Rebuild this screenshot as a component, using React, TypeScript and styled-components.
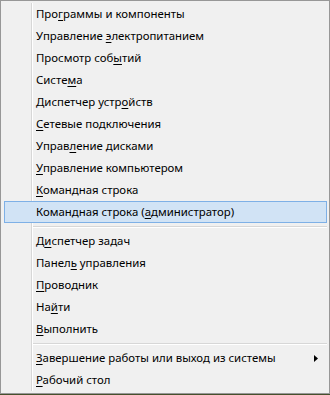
import React from "react";
import styled, { createGlobalStyle } from "styled-components";

const Global = createGlobalStyle`
  html, body {
    margin: 0;
    padding: 0;
    background: #46502c;
  }
  body {
    font-family: "Noto Sans", "Open Sans", sans-serif;
  }
`;

const Menu = styled.div`
  box-sizing: border-box;
  width: 330px;
  border: 1px solid #979797;
  padding: 2px 2px 2px 3px;
  background:
    linear-gradient(to right, #d7d7d7 0 1px, #ffffff 1px 2px) no-repeat 30px 2px / 2px calc(100% - 4px),
    #f0f0f0;
  display: flex;
  flex-direction: column;
`;

const Item = styled.div<{ $active?: boolean }>`
  box-sizing: border-box;
  height: 22px;
  display: flex;
  align-items: center;
  padding: 0 8px 0 31px;
  border: 1px solid ${(p) => (p.$active ? "#7eb0e6" : "transparent")};
  background: ${(p) => (p.$active ? "#d1e3f5" : "transparent")};
  font-size: 11.4px;
  line-height: 20px;
  color: #000;
  white-space: nowrap;
  u {
    text-decoration: underline;
    text-underline-offset: 2px;
  }
`;

const Label = styled.span`
  flex: 1;
`;

const Separator = styled.div`
  height: 0;
  margin: 3px 0 2px 29px;
  border-top: 1px solid #d7d7d7;
  border-bottom: 1px solid #ffffff;
`;

const Arrow = () => (
  <svg width="4" height="7" viewBox="0 0 4 7">
    <path d="M0 0 L4 3.5 L0 7 Z" fill="#000" />
  </svg>
);

type Entry = { pre: string; key: string; post: string; active?: boolean; sub?: boolean };

const groups: Entry[][] = [
  [
    { pre: "Про", key: "г", post: "раммы и компоненты" },
    { pre: "Управление ", key: "э", post: "лектропитанием" },
    { pre: "Просмотр соб", key: "ы", post: "тий" },
    { pre: "Систе", key: "м", post: "а" },
    { pre: "Диспетчер устр", key: "о", post: "йств" },
    { pre: "", key: "С", post: "етевые подключения" },
    { pre: "Управ", key: "л", post: "ение дисками" },
    { pre: "", key: "У", post: "правление компьютером" },
    { pre: "", key: "К", post: "омандная строка" },
    { pre: "Командная строка (", key: "а", post: "дминистратор)", active: true },
  ],
  [
    { pre: "Д", key: "и", post: "спетчер задач" },
    { pre: "Панел", key: "ь", post: " управления" },
    { pre: "", key: "П", post: "роводник" },
    { pre: "На", key: "й", post: "ти" },
    { pre: "", key: "В", post: "ыполнить" },
  ],
  [
    { pre: "", key: "З", post: "авершение работы или выход из системы", sub: true },
    { pre: "", key: "Р", post: "абочий стол" },
  ],
];

export default function App() {
  return (
    <>
      <Global />
      <Menu>
        {groups.map((g, gi) => (
          <React.Fragment key={gi}>
            {gi > 0 && <Separator />}
            {g.map((e, i) => (
              <Item key={i} $active={e.active}>
                <Label>
                  {e.pre}
                  <u>{e.key}</u>
                  {e.post}
                </Label>
                {e.sub && <Arrow />}
              </Item>
            ))}
          </React.Fragment>
        ))}
      </Menu>
    </>
  );
}
